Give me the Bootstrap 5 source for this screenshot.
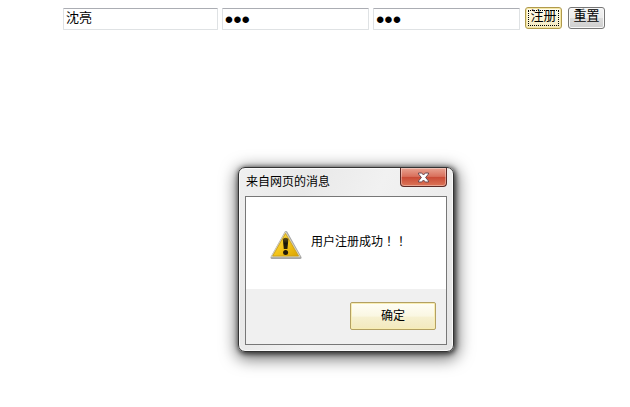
<!DOCTYPE html>
<html lang="zh-CN">
<head>
<meta charset="utf-8">
<meta name="viewport" content="width=device-width, initial-scale=1">
<title>用户注册</title>
<link href="https://cdn.jsdelivr.net/npm/bootstrap@5.3.0/dist/css/bootstrap.min.css" rel="stylesheet">
<style>
  body { font-family: "Noto Sans CJK SC", sans-serif; font-size: 12px; line-height: 16px; color: #000; background: #fff; }
  .signup { padding: 7px 25px 0 63px; gap: 5px; }
  .signup .form-control { height: 22px; min-width: 0; margin-top: 1px; padding: 0 2px 6px; font-size: 13px; line-height: 14px; color: #000; border: 1px solid #dfe2e4; border-top-color: #abadb3; border-radius: 1px; flex: 147 1 0; }
  .signup .form-control.name-field { flex-grow: 155; }
  .signup .form-control[type=password] { font-family: "Liberation Sans", sans-serif; font-size: 24px; padding: 2px 2px 0; }
  .tool-set { gap: 6px; }
  .tool-btn { width: 37px; height: 22px; padding: 0 0 6px; font-size: 13px; line-height: 14px; color: #000; border: 1px solid #777; border-radius: 3px; background: linear-gradient(#f4f4f4, #ebebeb 50%, #dcdcdc 50%, #cfcfcf); box-shadow: inset 0 0 0 1px #f8f8f8; }
  .tool-btn.primary-btn { border-color: #b09a4c; background: linear-gradient(#fffef4, #faf4d8 50%, #f3e9bd); box-shadow: inset 0 0 0 1px #f5e7a5; outline: 1px dotted #000; outline-offset: -4px; }
  .msg-window { position: absolute; left: 238px; top: 167px; width: 216px; padding: 0 6px 6px; border: 1px solid #333; border-radius: 7px; background: linear-gradient(115deg, #f0f0f0, #e9e9e9 25%, #f1f1f1 50%, #ececec 75%, #e4e4e4); box-shadow: inset 0 0 0 1px #fafafa, 1px 1px 5px 1px rgba(0,0,0,.65), 1px 4px 16px 3px rgba(0,0,0,.55); }
  .msg-title { height: 28px; padding-top: 5px; }
  .msg-title h1 { font-size: 12px; line-height: 16px; font-weight: 400; padding-left: 1px; }
  .close-x { width: 47px; height: 19px; margin-top: -5px; border: 1px solid #5c2a26; border-top: 0; border-radius: 0 0 4px 4px; background: linear-gradient(#e9a493, #d9705c 47%, #c94a35 50%, #dc7558); box-shadow: inset 0 0 0 1px rgba(255,255,255,.35); }
  .msg-pane { border: 1px solid #777; background: #f0f0f0; }
  .msg-text { height: 92px; padding: 0 24px; gap: 9px; background: #fff; }
  .msg-text svg { margin-top: 4px; }
  .centered-marks { font-family: "Noto Sans CJK TC", sans-serif; }
  .msg-foot { height: 55px; padding: 13px 10px 0; }
  .msg-foot .ok-btn { width: 86px; height: 28px; padding: 0 0 2px; font-size: 12px; line-height: 16px; color: #000; border: 1px solid #b3a062; border-radius: 2px; background: linear-gradient(#fffef6, #faf7e2 50%, #f6f0d0 55%, #f3e9bd); box-shadow: inset 0 0 0 1px #f8edb2; }
</style>
</head>
<body>
<form class="signup d-flex align-items-start">
  <div class="d-flex flex-grow-1 gap-1">
    <input class="form-control name-field" type="text" value="沈亮" aria-label="用户名">
    <input class="form-control" type="password" value="123" aria-label="密码">
    <input class="form-control" type="password" value="123" aria-label="确认密码">
  </div>
  <div class="tool-set d-flex">
    <button class="btn tool-btn primary-btn" type="submit">注册</button>
    <button class="btn tool-btn" type="reset">重置</button>
  </div>
</form>
<section class="msg-window" role="alertdialog" aria-labelledby="msgTitle" aria-describedby="msgText">
  <header class="msg-title d-flex justify-content-between align-items-start">
    <h1 class="m-0" id="msgTitle">来自网页的消息</h1>
    <button class="close-x p-0 d-flex align-items-center justify-content-center" type="button" aria-label="关闭">
      <svg width="13" height="11" viewBox="0 0 13 11" aria-hidden="true"><path d="M1.500 1h3.200l1.800 2 1.800-2h3.200v1L8.600 5.500l2.900 3.500v1H8.300L6.500 8 4.700 10H1.500V9l2.900-3.500L1.500 2z" fill="#fff" stroke="#6a4a52"/></svg>
    </button>
  </header>
  <div class="msg-pane">
    <div class="msg-text d-flex align-items-center">
      <svg class="flex-shrink-0" width="32" height="30" viewBox="0 0 32 30" aria-hidden="true">
        <defs>
          <linearGradient id="gold" x1="0" y1="0" x2="1" y2="1"><stop offset="0" stop-color="#ffe65a"/><stop offset=".5" stop-color="#f5c61b"/><stop offset="1" stop-color="#dba400"/></linearGradient>
          <linearGradient id="bang" x1="0" y1="0" x2="0" y2="1"><stop offset="0" stop-color="#665316"/><stop offset=".5" stop-color="#17140a"/><stop offset="1" stop-color="#2b220a"/></linearGradient>
        </defs>
        <path d="M16 2.500 30 27.500H2z" fill="#a5a5a5" stroke="#a5a5a5" stroke-width="3" stroke-linejoin="round"/>
        <path d="M15.500 2.500 29.500 26.500H1.800z" fill="#e0d9bd" stroke="#d8d2b8" stroke-width="1.500" stroke-linejoin="round"/>
        <path d="M15.500 3.500 28.500 26H2.700z" fill="url(#gold)" stroke="#c99c12" stroke-width=".8" stroke-linejoin="round"/>
        <path d="M12.800 9q2.800-2.400 5.600 0l-1 10h-3.600z" fill="url(#bang)"/>
        <circle cx="15.600" cy="22.500" r="2.500" fill="#211b0a"/>
      </svg>
      <p class="m-0 pb-1 text-nowrap" id="msgText">用户注册成功<span class="centered-marks" lang="zh-TW">！！</span></p>
    </div>
    <div class="msg-foot d-flex justify-content-end align-items-start">
      <button class="btn ok-btn" type="button">确定</button>
    </div>
  </div>
</section>
<script src="https://cdn.jsdelivr.net/npm/bootstrap@5.3.0/dist/js/bootstrap.bundle.min.js"></script>
</body>
</html>
